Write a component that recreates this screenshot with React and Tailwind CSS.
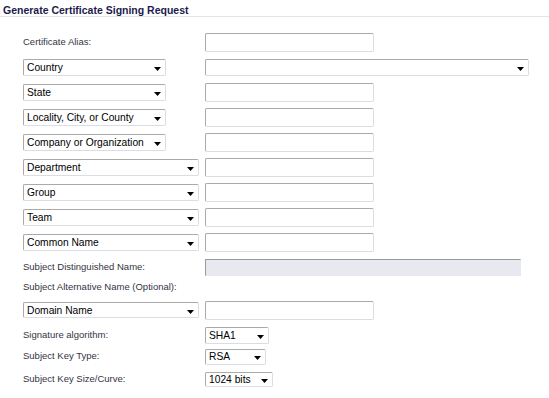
const rows = [
  { label: 'Certificate Alias:', right: 'input' },
  { select: 'Country', w: 'short', right: 'wide' },
  { select: 'State', w: 'short', right: 'input' },
  { select: 'Locality, City, or County', w: 'short', right: 'input' },
  { select: 'Company or Organization', w: 'short', right: 'input' },
  { select: 'Department', w: 'long', right: 'input' },
  { select: 'Group', w: 'long', right: 'input' },
  { select: 'Team', w: 'long', right: 'input' },
  { select: 'Common Name', w: 'long', right: 'input' },
  { label: 'Subject Distinguished Name:', right: 'readonly' },
]

const box = 'border border-t-[#aaaaaa] border-l-[#aaaaaa] border-r-[#dadde3] border-b-[#dadde3] rounded-[2px]'

function Arrow() {
  return (
    <svg width="7" height="4" viewBox="0 0 7 4" className="mt-[3px] shrink-0">
      <polygon points="0,0 7,0 3.5,4" fill="#000" />
    </svg>
  )
}

function Select({ text, className }) {
  return (
    <div className={`${box} bg-white flex items-center justify-between pl-[3px] pr-[4px] text-[10.25px] text-black leading-none ${className}`}>
      <span className="whitespace-nowrap pt-[2px]">{text}</span>
      <Arrow />
    </div>
  )
}

function Input({ className = '' }) {
  return <div className={`${box} bg-white w-[169px] h-[19px] ${className}`} />
}

function Label({ children }) {
  return <span className="text-[9.5px] text-[#34343f] whitespace-nowrap">{children}</span>
}

export default function App() {
  return (
    <div className="w-[549px] h-[398px] bg-white font-['Liberation_Sans',Arial,sans-serif] overflow-hidden">
      <div className="h-[17px] border-b border-[#e1e4e9] pl-[3px] pt-[5px]">
        <h1 className="text-[10.5px] font-bold leading-[11px] text-[#1b1b4d]">Generate Certificate Signing Request</h1>
      </div>

      <div className="pl-[23px] pt-[13px]">
        {rows.map((row, i) => (
          <div key={i} className="grid grid-cols-[182px_1fr] h-[25px] items-center">
            <div className="flex items-center">
              {row.label ? (
                <Label>{row.label}</Label>
              ) : (
                <Select text={row.select} className={row.w === 'short' ? 'w-[143px] h-[17px]' : 'w-[176px] h-[17px]'} />
              )}
            </div>
            <div className="flex items-center">
              {row.right === 'input' && <Input />}
              {row.right === 'wide' && <Select text="" className="w-[324px] h-[17px]" />}
              {row.right === 'readonly' && (
                <div className="w-[316px] h-[17px] bg-[#e8e8f0] border border-t-[#9a9a9a] border-l-[#9a9a9a] border-r-[#e8e8f0] border-b-[#e8e8f0]" />
              )}
            </div>
          </div>
        ))}

        <div className="h-[15px] flex items-center">
          <Label>Subject Alternative Name (Optional):</Label>
        </div>

        <div className="grid grid-cols-[182px_1fr] h-[30px] items-center">
          <Select text="Domain Name" className="w-[176px] h-[16px]" />
          <Input />
        </div>

        <div className="grid grid-cols-[182px_1fr] h-[20px] items-center">
          <Label>Signature algorithm:</Label>
          <Select text="SHA1" className="w-[64px] h-[17px]" />
        </div>

        <div className="grid grid-cols-[182px_1fr] h-[23px] items-center">
          <Label>Subject Key Type:</Label>
          <Select text="RSA" className="w-[61px] h-[16px]" />
        </div>

        <div className="grid grid-cols-[182px_1fr] h-[23px] items-center">
          <Label>Subject Key Size/Curve:</Label>
          <Select text="1024 bits" className="w-[68px] h-[15px]" />
        </div>
      </div>
    </div>
  )
}
